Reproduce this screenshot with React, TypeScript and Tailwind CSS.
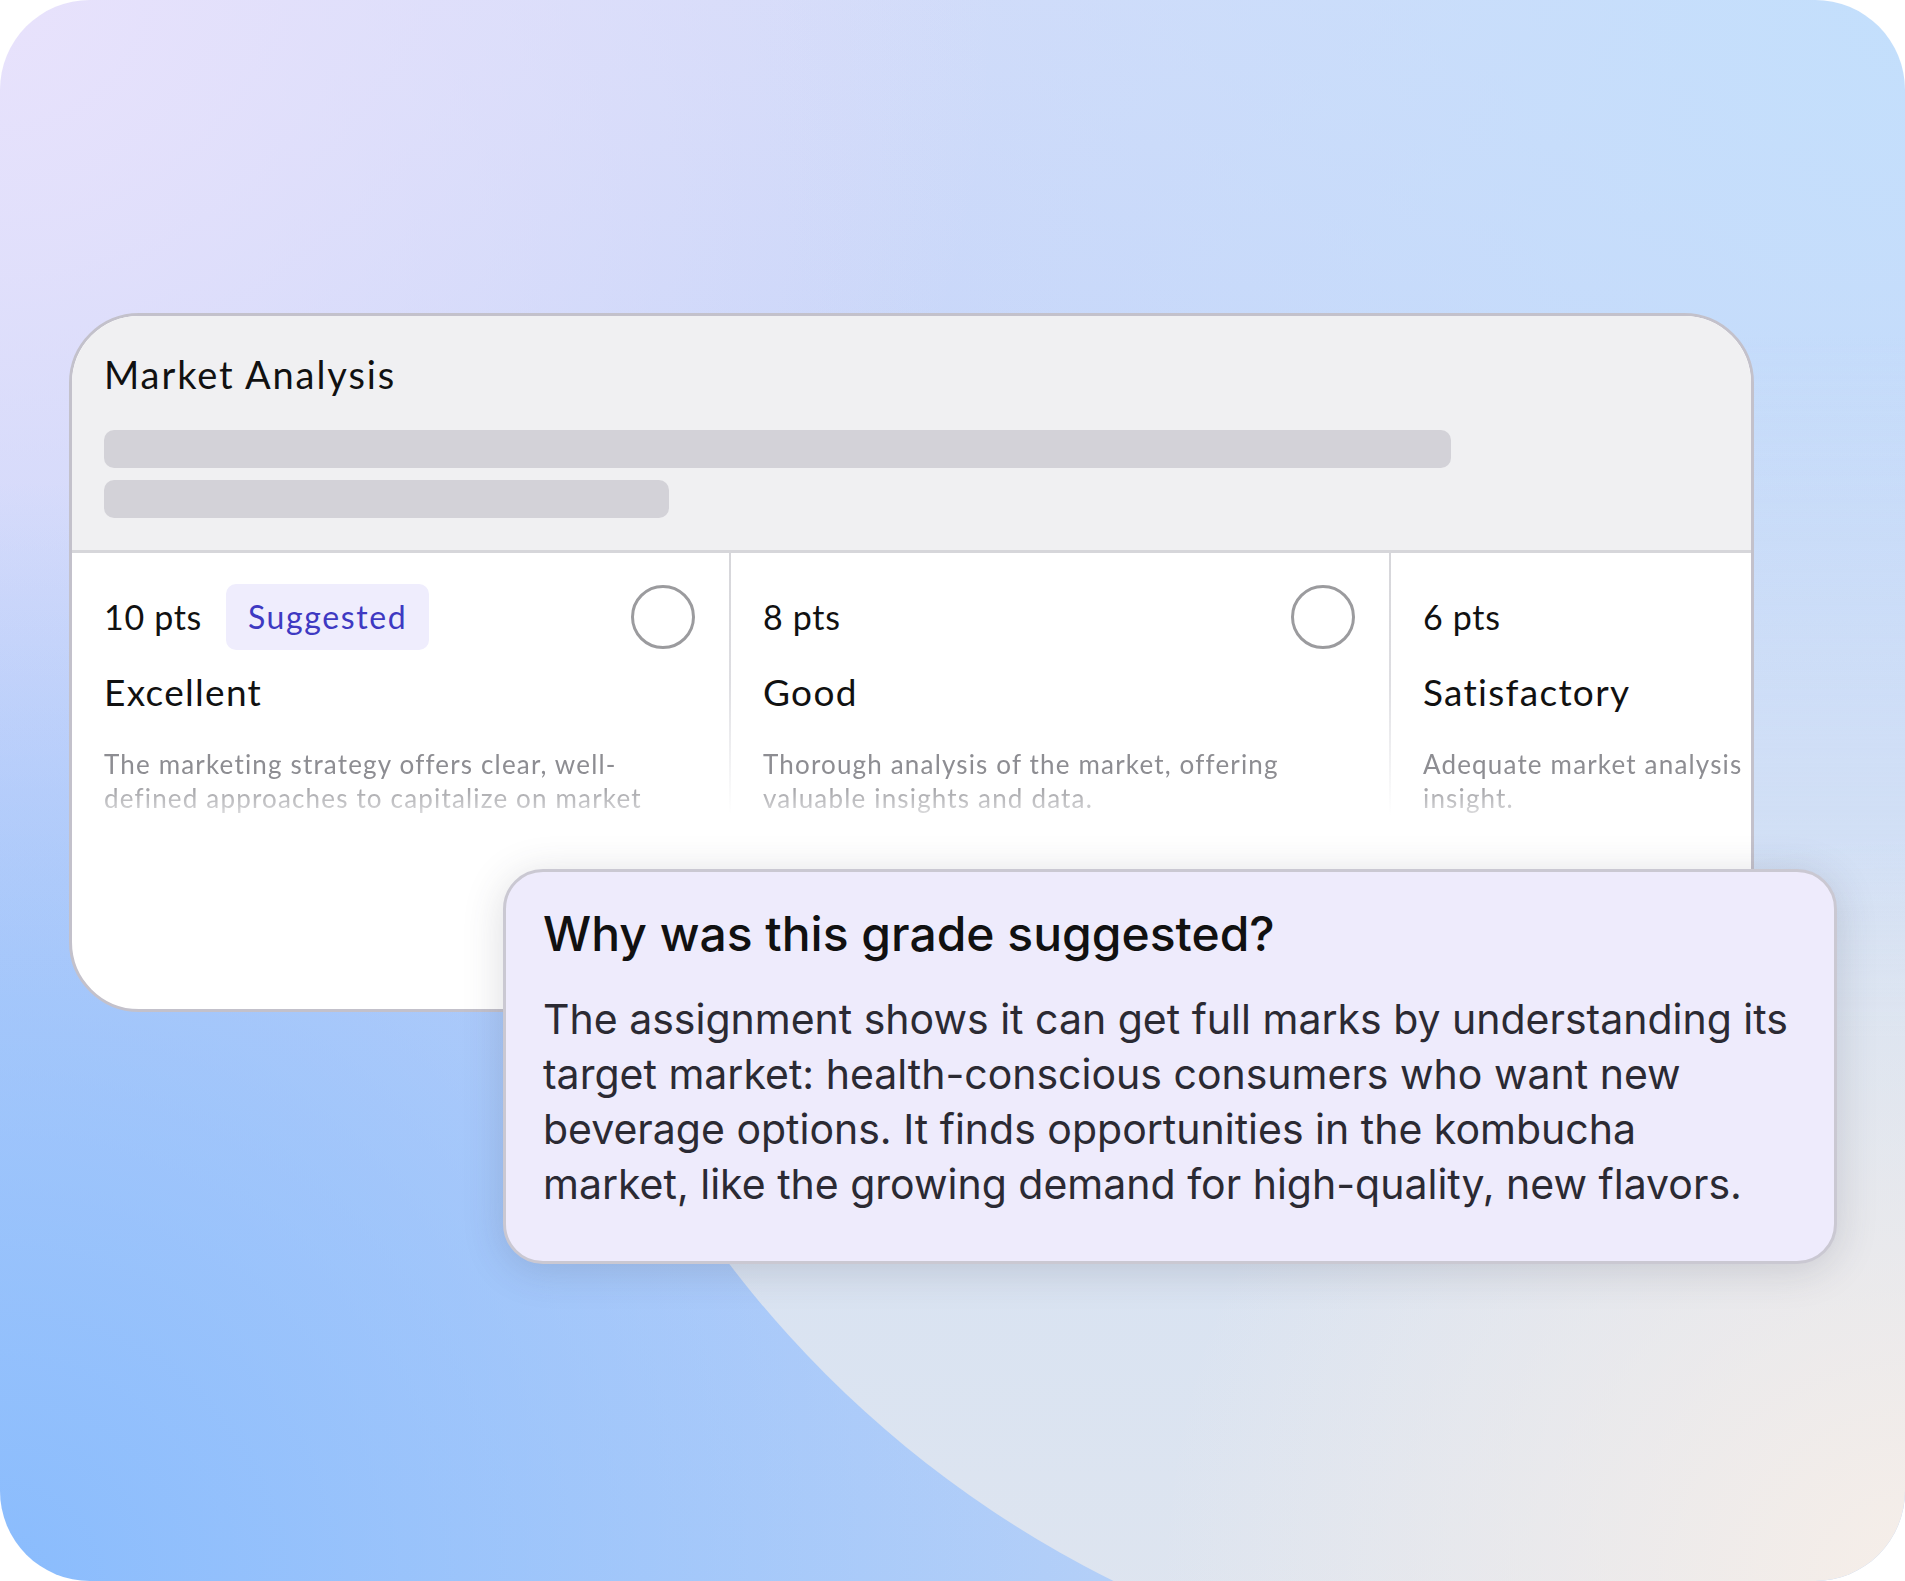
import React from 'react';

interface Level {
  points: string;
  title: string;
  lines: string[];
  suggested?: boolean;
  radio?: boolean;
}

const levels: Level[] = [
  {
    points: '10 pts',
    title: 'Excellent',
    lines: ['The marketing strategy offers clear, well-', 'defined approaches to capitalize on market'],
    suggested: true,
    radio: true,
  },
  {
    points: '8 pts',
    title: 'Good',
    lines: ['Thorough analysis of the market, offering', 'valuable insights and data.'],
    radio: true,
  },
  {
    points: '6 pts',
    title: 'Satisfactory',
    lines: ['Adequate market analysis', 'insight.'],
    radio: true,
  },
];

function LevelColumn({ level, width }: { level: Level; width: string }) {
  return (
    <div className={`${width} shrink-0 h-[262px] overflow-hidden pl-[32px] pr-[34px] pt-[31px]`}>
      <div className="flex h-[66px] items-center">
        <span className="text-[34px] leading-none tracking-[0.02em] text-[#111]">{level.points}</span>
        {level.suggested && (
          <span className="ml-[24px] flex h-[66px] items-center rounded-[10px] bg-[#efedfd] px-[22px] text-[32px] tracking-[0.05em] text-[#3e39c2]">
            Suggested
          </span>
        )}
        <div className="flex-1" />
        {level.radio && (
          <div className="h-[64px] w-[64px] shrink-0 rounded-full border-[3px] border-[#9b9b9e]" />
        )}
      </div>
      <div className="mt-[20px] text-[37px] leading-[44px] tracking-[0.035em] text-[#111]">{level.title}</div>
      <p className="mt-[33px] whitespace-nowrap text-[26px] leading-[34px] tracking-[0.045em] text-[#8d8d92] [mask-image:linear-gradient(to_bottom,#000_45%,rgba(0,0,0,0.3)_100%)]">
        {level.lines[0]}
        <br />
        {level.lines[1]}
      </p>
    </div>
  );
}

function Divider() {
  return <div className="h-[262px] w-[2px] shrink-0 bg-linear-to-b from-[#d6d6da] via-[#dedee2] to-transparent" />;
}

export default function App() {
  return (
    <div className="h-[1581px] w-[1905px] bg-white">
      <div className="relative h-[1581px] w-[1905px] overflow-hidden rounded-[90px] bg-[image:radial-gradient(1100px_circle_at_0%_100%,#8abcfd_0%,rgba(138,188,253,0)_100%),radial-gradient(1000px_circle_at_0%_0%,#e8e2fc_0%,rgba(232,226,252,0)_100%),radial-gradient(1150px_circle_at_100%_0%,#c3dffc_0%,rgba(195,223,252,0)_100%),linear-gradient(to_bottom,#d3dbf9_0%,#bdd0f9_50%,#b3cff8_100%)]">
        {/* soft blob behind the popup */}
        <div className="absolute left-[505px] top-[-495px] h-[2190px] w-[2190px] rounded-full bg-[image:radial-gradient(750px_circle_at_64%_95%,#f6eee8_0%,rgba(246,238,232,0)_100%),linear-gradient(to_bottom,rgba(214,226,244,0)_38%,rgba(212,225,245,0.75)_56%,#d6e2f3_70%,#dfe5ef_100%)]" />

        <div className="relative pl-[69px] pt-[313px]">
          {/* rubric card */}
          <div className="flex h-[699px] w-[1685px] flex-col overflow-hidden rounded-[70px] border-[3px] border-[#c3c1cb] bg-white font-['Lato',sans-serif]">
            <div className="border-b-[3px] border-[#d6d6da] bg-[#f0f0f2] pb-[32px] pl-[32px] pt-[36px]">
              <div className="text-[38px] leading-[44px] tracking-[0.05em] text-[#111]">Market Analysis</div>
              <div className="mt-[34px] h-[38px] w-[1347px] rounded-[10px] bg-[#d3d2d8]" />
              <div className="mt-[12px] h-[38px] w-[565px] rounded-[10px] bg-[#d3d2d8]" />
            </div>
            <div className="flex">
              <LevelColumn level={levels[0]} width="w-[657px]" />
              <Divider />
              <LevelColumn level={levels[1]} width="w-[658px]" />
              <Divider />
              <LevelColumn level={levels[2]} width="w-[658px]" />
            </div>
          </div>

          {/* explanation popover */}
          <div className="relative -mt-[143px] ml-[434px] h-[395px] w-[1334px] rounded-[40px] border-[3px] border-[#cac8d2] bg-[#eeebfc] pl-[37px] pr-[20px] pt-[34px] font-['Inter',sans-serif] shadow-[0_6px_40px_rgba(60,60,80,0.18)]">
            <div className="text-[48px] font-medium leading-[56px] text-[#111]">Why was this grade suggested?</div>
            <p className="mt-[30px] whitespace-nowrap text-[41px] leading-[55px] text-[#2b2a33]">
              The assignment shows it can get full marks by understanding its
              <br />
              target market: health-conscious consumers who want new
              <br />
              beverage options. It finds opportunities in the kombucha
              <br />
              market, like the growing demand for high-quality, new flavors.
            </p>
          </div>
        </div>
      </div>
    </div>
  );
}
